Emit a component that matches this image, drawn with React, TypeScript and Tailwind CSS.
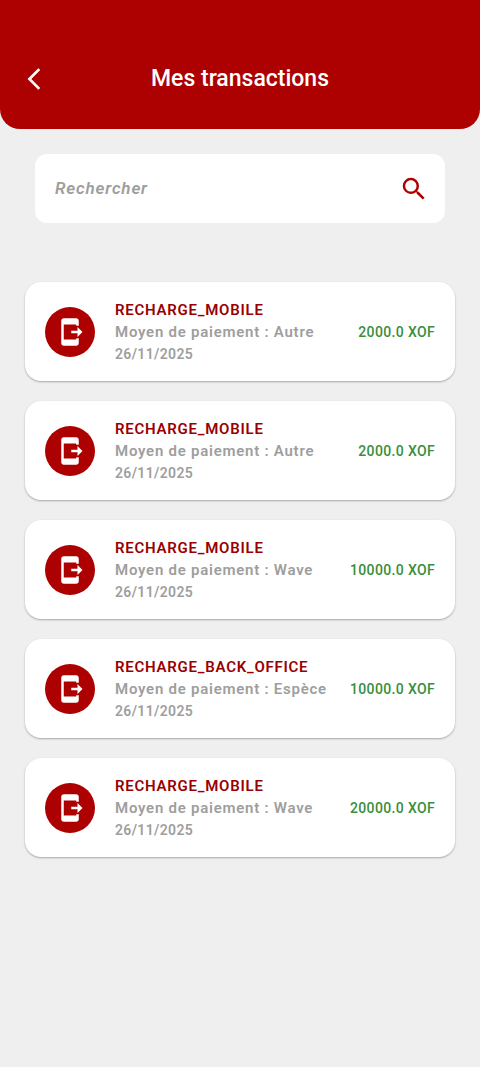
import { useState } from 'react'
import { MdArrowBackIosNew, MdSearch, MdSendToMobile } from 'react-icons/md'

interface Transaction {
  id: number
  type: string
  method: string
  date: string
  amount: string
}

const transactions: Transaction[] = [
  { id: 1, type: 'RECHARGE_MOBILE', method: 'Autre', date: '26/11/2025', amount: '2000.0' },
  { id: 2, type: 'RECHARGE_MOBILE', method: 'Autre', date: '26/11/2025', amount: '2000.0' },
  { id: 3, type: 'RECHARGE_MOBILE', method: 'Wave', date: '26/11/2025', amount: '10000.0' },
  { id: 4, type: 'RECHARGE_BACK_OFFICE', method: 'Espèce', date: '26/11/2025', amount: '10000.0' },
  { id: 5, type: 'RECHARGE_MOBILE', method: 'Wave', date: '26/11/2025', amount: '20000.0' },
]

function TransactionCard({ transaction }: { transaction: Transaction }) {
  return (
    <li className="flex min-h-[99px] items-center gap-5 rounded-2xl bg-white px-5 py-4 shadow-[0_1px_2px_rgba(0,0,0,0.3)]">
      <div className="flex size-[50px] shrink-0 items-center justify-center rounded-full bg-[#ad0000] text-white">
        <MdSendToMobile size={30} />
      </div>
      <div className="min-w-0 flex-1 text-[15px] leading-[22px] font-semibold tracking-wider whitespace-nowrap text-[#9e9e9e]">
        <h2 className="text-[#990000]">{transaction.type}</h2>
        <p>Moyen de paiement : {transaction.method}</p>
        <p className="text-sm leading-[22px] tracking-wide">{transaction.date}</p>
      </div>
      <span className="shrink-0 text-sm font-medium tracking-wide text-[#388e3c]">{transaction.amount} XOF</span>
    </li>
  )
}

export default function App() {
  const [query, setQuery] = useState('')
  const visible = transactions.filter((t) =>
    `${t.type} ${t.method} ${t.date} ${t.amount}`.toLowerCase().includes(query.toLowerCase())
  )

  return (
    <div className="min-h-screen bg-[#efefef] font-['Roboto',sans-serif]">
      {/* Header */}
      <header className="grid grid-cols-[44px_1fr_44px] items-center rounded-b-[20px] bg-[#ad0000] px-3 pt-[61px] pb-8 text-white">
        <button type="button" aria-label="Retour" className="flex h-9 items-center justify-center">
          <MdArrowBackIosNew size={26} />
        </button>
        <h1 className="text-center text-[23px] leading-9 font-medium">Mes transactions</h1>
      </header>

      <main className="px-[25px] pt-[25px] pb-10">
        {/* Search */}
        <label className="mx-[10px] flex h-[69px] items-center rounded-xl bg-white pr-4 pl-5">
          <input
            type="text"
            aria-label="Rechercher"
            placeholder="Rechercher"
            value={query}
            onChange={(e) => setQuery(e.target.value)}
            className="min-w-0 flex-1 text-[17px] font-semibold tracking-wider text-[#990000] italic outline-none placeholder:text-[#9e9e9e]"
          />
          <MdSearch size={30} className="shrink-0 text-[#ad0000]" />
        </label>

        {/* Transactions */}
        <ul className="mt-[59px] flex flex-col gap-5">
          {visible.map((t) => (
            <TransactionCard key={t.id} transaction={t} />
          ))}
        </ul>
      </main>
    </div>
  )
}
